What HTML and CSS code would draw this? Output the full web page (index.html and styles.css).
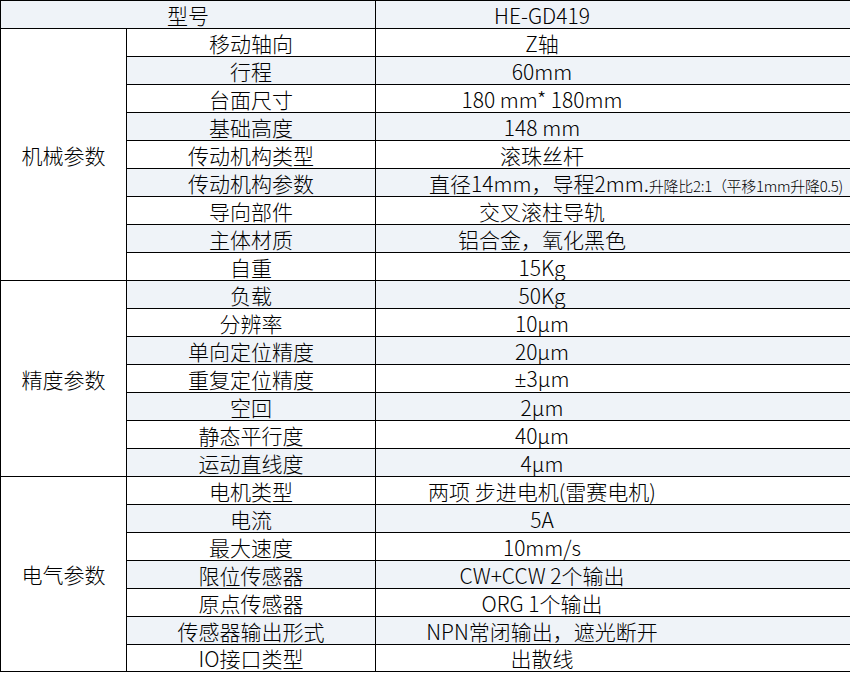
FILE: index.html
```html
<!DOCTYPE html>
<html lang="zh-CN">
<head>
<meta charset="utf-8">
<title>HE-GD419 参数</title>
<link rel="stylesheet" href="styles.css">
</head>
<body>
<table class="spec">
  <colgroup>
    <col class="c1">
    <col class="c2">
    <col class="c3">
  </colgroup>
  <tbody>
    <tr class="shade"><td class="name" colspan="2">型号</td><td class="val">HE-GD419</td></tr>
    <tr><td class="grp" rowspan="9">机械参数</td><td class="name">移动轴向</td><td class="val">Z轴</td></tr>
    <tr class="shade"><td class="name">行程</td><td class="val">60mm</td></tr>
    <tr><td class="name">台面尺寸</td><td class="val">180 mm* 180mm</td></tr>
    <tr class="shade"><td class="name">基础高度</td><td class="val">148 mm</td></tr>
    <tr><td class="name">传动机构类型</td><td class="val">滚珠丝杆</td></tr>
    <tr class="shade"><td class="name">传动机构参数</td><td class="val long">直径14mm，导程2mm.<span class="note">升降比2:1（平移1mm升降0.5)</span></td></tr>
    <tr><td class="name">导向部件</td><td class="val">交叉滚柱导轨</td></tr>
    <tr class="shade"><td class="name">主体材质</td><td class="val">铝合金，氧化黑色</td></tr>
    <tr><td class="name">自重</td><td class="val">15Kg</td></tr>
    <tr class="shade"><td class="grp" rowspan="7">精度参数</td><td class="name">负载</td><td class="val">50Kg</td></tr>
    <tr><td class="name">分辨率</td><td class="val">10μm</td></tr>
    <tr class="shade"><td class="name">单向定位精度</td><td class="val">20μm</td></tr>
    <tr><td class="name">重复定位精度</td><td class="val"><span class="latin">±</span>3μm</td></tr>
    <tr class="shade"><td class="name">空回</td><td class="val">2μm</td></tr>
    <tr><td class="name">静态平行度</td><td class="val">40μm</td></tr>
    <tr class="shade"><td class="name">运动直线度</td><td class="val">4μm</td></tr>
    <tr><td class="grp" rowspan="7">电气参数</td><td class="name">电机类型</td><td class="val">两项 步进电机(雷赛电机)</td></tr>
    <tr class="shade"><td class="name">电流</td><td class="val">5A</td></tr>
    <tr><td class="name">最大速度</td><td class="val">10mm/s</td></tr>
    <tr class="shade"><td class="name">限位传感器</td><td class="val">CW+CCW 2个输出</td></tr>
    <tr><td class="name">原点传感器</td><td class="val">ORG 1个输出</td></tr>
    <tr class="shade"><td class="name">传感器输出形式</td><td class="val">NPN常闭输出，遮光断开</td></tr>
    <tr class="last"><td class="name">IO接口类型</td><td class="val">出散线</td></tr>
  </tbody>
</table>
</body>
</html>
```
FILE: styles.css
```css
html, body {
  margin: 0;
  padding: 0;
  background: #ffffff;
  overflow: hidden;
}

.spec {
  border-collapse: collapse;
  table-layout: fixed;
  width: 852px;
  font-family: "Noto Sans CJK SC", "Noto Sans", sans-serif;
  font-weight: 300;
  font-size: 21px;
  color: #000000;
}

.c1 { width: 126px; }
.c2 { width: 249px; }
.c3 { width: 477px; }

.spec tr {
  height: 28px;
}

.spec tr.last {
  height: 27px;
}

.spec td {
  border: 1px solid #000000;
  padding: 0;
  line-height: 26px;
  text-align: center;
  white-space: nowrap;
  overflow: hidden;
}

.spec tr.shade td {
  background: #eff3f8;
}

.spec tr.shade td.grp,
.spec td.grp {
  background: #ffffff;
}

.val {
  padding-right: 144px !important;
}

.val.long {
  text-align: left;
  padding-left: 53px !important;
  padding-right: 0 !important;
  overflow: visible;
}

.note {
  font-size: 15px;
  line-height: 14px;
  letter-spacing: -0.3px;
}

.latin {
  font-family: "Noto Sans", sans-serif;
}
```
